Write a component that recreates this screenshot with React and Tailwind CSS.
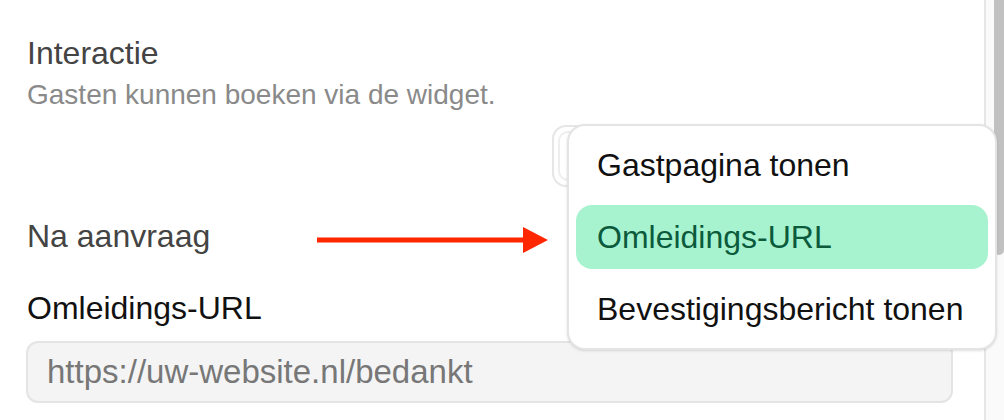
import React from 'react';

const options = ['Gastpagina tonen', 'Omleidings-URL', 'Bevestigingsbericht tonen'];

const Arrow = () => (
    <svg width="231" height="26" viewBox="0 0 231 26" className="mt-[7px] shrink-0">
        <rect x="0" y="10.5" width="208" height="5" fill="#ff2600" />
        <polygon points="206,0 231,13 206,26" fill="#ff2600" />
    </svg>
);

const App = () => {
    return (
        <div
            className="relative w-[1004px] h-[420px] flex overflow-hidden bg-white"
            style={{ fontFamily: '"Liberation Sans", Arial, sans-serif' }}
        >
            {/* Settings panel */}
            <div className="w-[986px] shrink-0 border-r-2 border-[#e6e6e6] pl-[26px] pr-[31px] pt-[33px]">
                <h3 className="text-[32px] leading-[40px] text-[#444444] pl-[1px]">Interactie</h3>
                <p className="mt-[4px] text-[28px] leading-[36px] text-[#8a8a8a] pl-[1px]">
                    Gasten kunnen boeken via de widget.
                </p>

                <div className="flex justify-end mt-[12px]">
                    <div className="w-[401px] h-[62px] rounded-[14px] border-2 border-[#e6e6e6] p-[4px]">
                        <div className="h-full rounded-[10px] border-2 border-[#eeeeee]"></div>
                    </div>
                </div>

                {/* Na aanvraag row */}
                <div className="flex items-center mt-[29px] h-[40px]">
                    <span className="w-[291px] shrink-0 pl-[1px] text-[32px] leading-[40px] text-[#444444]">
                        Na aanvraag
                    </span>
                    <Arrow />
                </div>

                <label className="block mt-[32px] pl-[1px] text-[32px] leading-[40px] text-[#111111]">
                    Omleidings-URL
                </label>
                <input
                    type="text"
                    placeholder="https://uw-website.nl/bedankt"
                    className="mt-[13px] w-full h-[62px] rounded-[12px] border-2 border-[#e4e4e4] bg-[#f4f4f4] px-[19px] text-[33px] text-[#222222] placeholder:text-[#777777] outline-none"
                />
            </div>

            {/* Scrollbar */}
            <div className="flex-1 bg-[#fafafa] flex justify-end">
                <div className="w-[10px] h-[255px] bg-[#c1c1c1] rounded-b-[5px]"></div>
            </div>

            {/* Open dropdown */}
            <div className="absolute left-[567px] top-[124px] w-[430px] h-[226px] rounded-[18px] border-2 border-[#e4e4e4] bg-white p-[7px] flex flex-col gap-[8px] shadow-sm">
                {options.map((opt) => (
                    <div
                        key={opt}
                        className={
                            opt === 'Omleidings-URL'
                                ? 'h-[64px] shrink-0 flex items-center rounded-[16px] bg-[#a7f3d0] pl-[21px] text-[32px] text-[#0b5a3c]'
                                : 'h-[64px] shrink-0 flex items-center rounded-[16px] pl-[21px] text-[32px] text-[#111111]'
                        }
                    >
                        {opt}
                    </div>
                ))}
            </div>
        </div>
    );
};

export default App;
